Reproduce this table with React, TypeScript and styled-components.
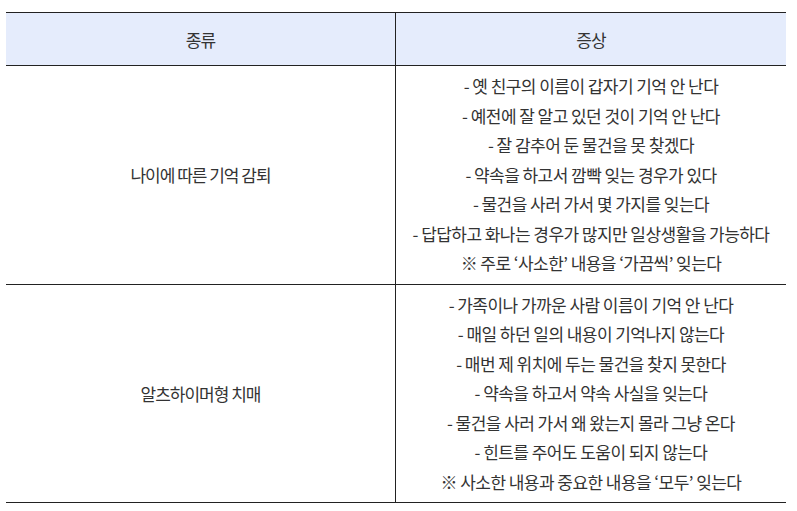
import styled, { createGlobalStyle } from "styled-components";

const GlobalStyle = createGlobalStyle`
  body {
    margin: 0;
    background: #fff;
    font-family: "Noto Sans CJK KR", "Noto Sans", sans-serif;
    color: #333;
  }
`;

const Wrap = styled.div`
  padding: 12px 11px 0 6px;
`;

const Table = styled.table`
  width: 780px;
  border-collapse: collapse;
  border-top: 1px solid #222;
  border-bottom: 1px solid #222;
  font-size: 17px;
  letter-spacing: -1px;
`;

const Head = styled.th`
  height: 52px;
  padding: 0;
  background: #e5ecfc;
  font-weight: 400;
  border-bottom: 1px solid #222;
  & + & {
    border-left: 1px solid #222;
  }
`;

const Kind = styled.td`
  width: 389px;
  padding: 0;
  text-align: center;
  vertical-align: middle;
  border-bottom: 1px solid #222;
`;

const Symptoms = styled.td`
  padding: 5px 0 6px;
  text-align: center;
  letter-spacing: -0.55px;
  border-left: 1px solid #222;
  border-bottom: 1px solid #222;
`;

const Line = styled.div`
  line-height: 29.5px;
`;

const rows = [
  {
    kind: "나이에 따른 기억 감퇴",
    items: [
      "- 옛 친구의 이름이 갑자기 기억 안 난다",
      "- 예전에 잘 알고 있던 것이 기억 안 난다",
      "- 잘 감추어 둔 물건을 못 찾겠다",
      "- 약속을 하고서 깜빡 잊는 경우가 있다",
      "- 물건을 사러 가서 몇 가지를 잊는다",
      "- 답답하고 화나는 경우가 많지만 일상생활을 가능하다",
      "※ 주로 ‘사소한’ 내용을 ‘가끔씩’ 잊는다",
    ],
  },
  {
    kind: "알츠하이머형 치매",
    items: [
      "- 가족이나 가까운 사람 이름이 기억 안 난다",
      "- 매일 하던 일의 내용이 기억나지 않는다",
      "- 매번 제 위치에 두는 물건을 찾지 못한다",
      "- 약속을 하고서 약속 사실을 잊는다",
      "- 물건을 사러 가서 왜 왔는지 몰라 그냥 온다",
      "- 힌트를 주어도 도움이 되지 않는다",
      "※ 사소한 내용과 중요한 내용을 ‘모두’ 잊는다",
    ],
  },
];

export default function App() {
  return (
    <Wrap>
      <GlobalStyle />
      <Table>
        <thead>
          <tr>
            <Head>종류</Head>
            <Head>증상</Head>
          </tr>
        </thead>
        <tbody>
          {rows.map((row) => (
            <tr key={row.kind}>
              <Kind>{row.kind}</Kind>
              <Symptoms>
                {row.items.map((item) => (
                  <Line key={item}>{item}</Line>
                ))}
              </Symptoms>
            </tr>
          ))}
        </tbody>
      </Table>
    </Wrap>
  );
}
